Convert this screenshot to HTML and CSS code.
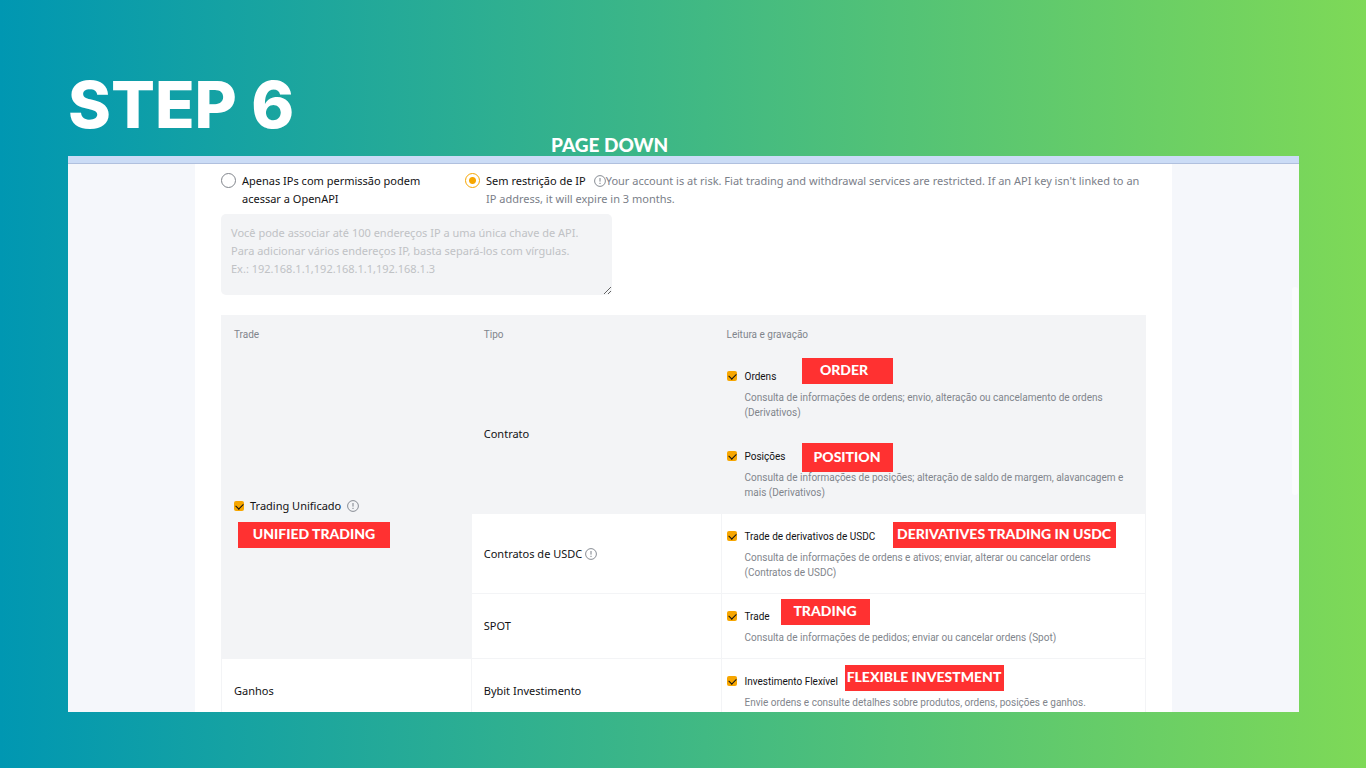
FILE: index.html
```html
<!DOCTYPE html>
<html lang="pt">
<head>
<meta charset="utf-8">
<title>Step 6</title>
<link rel="stylesheet" href="styles.css">
</head>
<body>
<svg class="defs" width="0" height="0" aria-hidden="true">
  <symbol id="info" viewBox="0 0 12 12">
    <circle cx="6" cy="6" r="5.4" fill="none" stroke="currentColor" stroke-width=".9"/>
    <path d="M6 3v3.6M6 7.8v1.2" fill="none" stroke="currentColor" stroke-width="1"/>
  </symbol>
</svg>
<main class="slide">
  <header class="slide-head">
    <h1 class="title">STEP 6</h1>
    <p class="subtitle">PAGE DOWN</p>
  </header>
  <section class="frame">
    <div class="strip"></div>
    <div class="viewport">
      <div class="page">
        <div class="choices">
          <div class="choice">
            <input class="radio" type="radio" name="ip" id="ip-only">
            <label for="ip-only">Apenas IPs com permissão podem acessar a OpenAPI</label>
          </div>
          <div class="choice">
            <input class="radio" type="radio" name="ip" id="ip-any" checked>
            <div class="choice-text"><label for="ip-any">Sem restrição de IP</label><span class="risk"><svg class="info"><use href="#info"/></svg>Your account is at risk. Fiat trading and withdrawal services are restricted. If an API key isn't linked to an IP address, it will expire in 3 months.</span></div>
          </div>
        </div>
        <textarea class="ips" aria-label="Endereços IP" placeholder="Você pode associar até 100 endereços IP a uma única chave de API.
Para adicionar vários endereços IP, basta separá-los com vírgulas.
Ex.: 192.168.1.1,192.168.1.1,192.168.1.3"></textarea>
        <table class="perms">
          <colgroup><col class="col-a"><col class="col-a"><col></colgroup>
          <thead>
            <tr><th>Trade</th><th>Tipo</th><th class="last">Leitura e gravação</th></tr>
          </thead>
          <tbody>
            <tr>
              <td class="shade" rowspan="3">
                <div class="unified">
                  <input class="check" type="checkbox" id="uni" checked>
                  <label for="uni">Trading Unificado</label>
                  <svg class="info"><use href="#info"/></svg>
                  <span class="tag tag-unified">UNIFIED TRADING</span>
                </div>
              </td>
              <td class="shade">Contrato</td>
              <td class="shade items">
                <div class="item">
                  <input class="check" type="checkbox" id="ord" checked>
                  <label for="ord">Ordens</label>
                  <p>Consulta de informações de ordens; envio, alteração ou cancelamento de ordens (Derivativos)</p>
                  <span class="tag tag-order">ORDER</span>
                </div>
                <div class="item">
                  <input class="check" type="checkbox" id="pos" checked>
                  <label for="pos">Posições</label>
                  <p>Consulta de informações de posições; alteração de saldo de margem, alavancagem e mais (Derivativos)</p>
                  <span class="tag tag-position">POSITION</span>
                </div>
              </td>
            </tr>
            <tr>
              <td>Contratos de USDC <svg class="info"><use href="#info"/></svg></td>
              <td class="items">
                <div class="item">
                  <input class="check" type="checkbox" id="usdc" checked>
                  <label for="usdc">Trade de derivativos de USDC</label>
                  <p>Consulta de informações de ordens e ativos; enviar, alterar ou cancelar ordens (Contratos de USDC)</p>
                  <span class="tag tag-usdc">DERIVATIVES TRADING IN USDC</span>
                </div>
              </td>
            </tr>
            <tr>
              <td>SPOT</td>
              <td class="items">
                <div class="item">
                  <input class="check" type="checkbox" id="spot" checked>
                  <label for="spot">Trade</label>
                  <p>Consulta de informações de pedidos; enviar ou cancelar ordens (Spot)</p>
                  <span class="tag tag-trading">TRADING</span>
                </div>
              </td>
            </tr>
            <tr>
              <td>Ganhos</td>
              <td>Bybit Investimento</td>
              <td class="items">
                <div class="item">
                  <input class="check" type="checkbox" id="flex" checked>
                  <label for="flex">Investimento Flexível</label>
                  <p>Envie ordens e consulte detalhes sobre produtos, ordens, posições e ganhos.</p>
                  <span class="tag tag-flex">FLEXIBLE INVESTMENT</span>
                </div>
              </td>
            </tr>
          </tbody>
        </table>
      </div>
    </div>
  </section>
</main>
</body>
</html>
```
FILE: styles.css
```css
* { box-sizing: border-box; }

body {
  margin: 0;
  font-family: "Noto Sans", "Liberation Sans", sans-serif;
  font-size: 11px;
  line-height: 18px;
  color: #121214;
}

.defs { position: absolute; }

.slide {
  height: 100vh;
  display: flex;
  flex-direction: column;
  padding: 0 67px 56px 68px;
  background: linear-gradient(90deg, #0097b2, #7ed957);
}

.slide-head {
  flex: none;
  padding-top: 77px;
  color: #fff;
  font-family: Lato, sans-serif;
  font-weight: 900;
}

.title {
  margin: 0;
  font-family: Inter, sans-serif;
  font-size: 65px;
  line-height: 56px;
  font-weight: 800;
}

.subtitle {
  width: 88%;
  margin: 0;
  text-align: center;
  font-size: 19px;
  line-height: 23px;
}

.frame {
  flex: 1;
  min-height: 0;
  display: flex;
  flex-direction: column;
}

.strip {
  flex: none;
  height: 8px;
  background: #cbdcf6;
  border-bottom: 1px solid #b0c0de;
}

.viewport {
  position: relative;
  flex: 1;
  min-height: 0;
  overflow: hidden;
  padding: 0 127px;
  background: #f5f7fb;
}

/* scroll thumb */
.viewport::after {
  content: "";
  position: absolute;
  top: 123px;
  right: 1px;
  width: 6px;
  height: 208px;
  border-radius: 3px;
  background: #fafbfd;
}

.page {
  min-height: 100%;
  padding: 8px 26px 0;
  background: #fff;
}

.choices {
  display: grid;
  grid-template-columns: 244px 1fr;
  margin-bottom: 6px;
}

.choice {
  display: flex;
  align-items: flex-start;
  gap: 6px;
}

.choice > label { max-width: 190px; }

.risk {
  margin-left: 8px;
  color: #7b8089;
}

.info {
  width: 12px;
  height: 12px;
  vertical-align: -2px;
  color: #7b8089;
}

.radio {
  appearance: none;
  flex: none;
  width: 15px;
  height: 15px;
  margin: 1px 0;
  border: 1px solid #81858c;
  border-radius: 50%;
}

.radio:checked {
  border-color: #f7a600;
  background: radial-gradient(circle, #f7a600 3px, transparent 4px);
}

.ips {
  display: block;
  width: 391px;
  height: 81px;
  margin: 0 0 20px;
  padding: 10px;
  border: 0;
  border-radius: 5px;
  background: #f3f4f6;
  font: inherit;
  resize: both;
}

.ips::placeholder { color: #c0c2c5; }

.perms {
  width: 100%;
  table-layout: fixed;
  border-collapse: separate;
  border-spacing: 0;
}

.col-a { width: 27%; }

th {
  height: 39px;
  padding: 0 13px;
  background: #f3f4f6;
  text-align: left;
  font-family: Roboto, sans-serif;
  font-size: 10px;
  font-weight: 400;
  color: #81858c;
}

th.last { padding-left: 6px; }

td {
  padding: 0 12px;
  border-left: 1px solid #f3f4f6;
  border-bottom: 1px solid #f3f4f6;
  vertical-align: middle;
}

td.items {
  padding: 0;
  border-right: 1px solid #f3f4f6;
}

td.shade { background: #f3f4f6; }

.check {
  appearance: none;
  position: relative;
  width: 10px;
  height: 10px;
  margin: 0;
  border-radius: 2px;
  background: #f7a600;
}

.check:checked::after {
  content: "";
  position: absolute;
  left: 2px;
  top: 2px;
  width: 6px;
  height: 4px;
  border: solid #121214;
  border-width: 0 0 1px 1px;
  transform: rotate(-45deg);
}

.unified {
  position: relative;
  display: flex;
  align-items: center;
  gap: 6px;
}

.item {
  position: relative;
  display: grid;
  grid-template-columns: 10px 1fr;
  column-gap: 8px;
  row-gap: 5px;
  padding: 15px 20px 14px 5px;
  font-family: Roboto, sans-serif;
  font-size: 10px;
  line-height: 16px;
}

.item .check { margin-top: 2px; }

.item:last-child { padding-bottom: 13px; }

.item p {
  grid-column: 2;
  margin: 0;
  line-height: 15px;
  color: #81858c;
}

.tag {
  position: absolute;
  height: 26px;
  background: #ff3131;
  color: #fff;
  font-family: Lato, sans-serif;
  font-size: 14px;
  font-weight: 900;
  line-height: 24px;
  text-align: center;
  white-space: nowrap;
}

.tag-unified { left: 4px; top: 25px; width: 152px; }
.tag-order { left: 80px; top: 4px; width: 91px; padding-right: 6px; }
.tag-position { left: 80px; top: 9px; width: 91px; height: 29px; line-height: 28px; }
.tag-usdc { left: 171px; top: 8px; width: 223px; }
.tag-trading { left: 59px; top: 5px; width: 89px; }
.tag-flex { left: 123px; top: 6px; width: 159px; }
```
